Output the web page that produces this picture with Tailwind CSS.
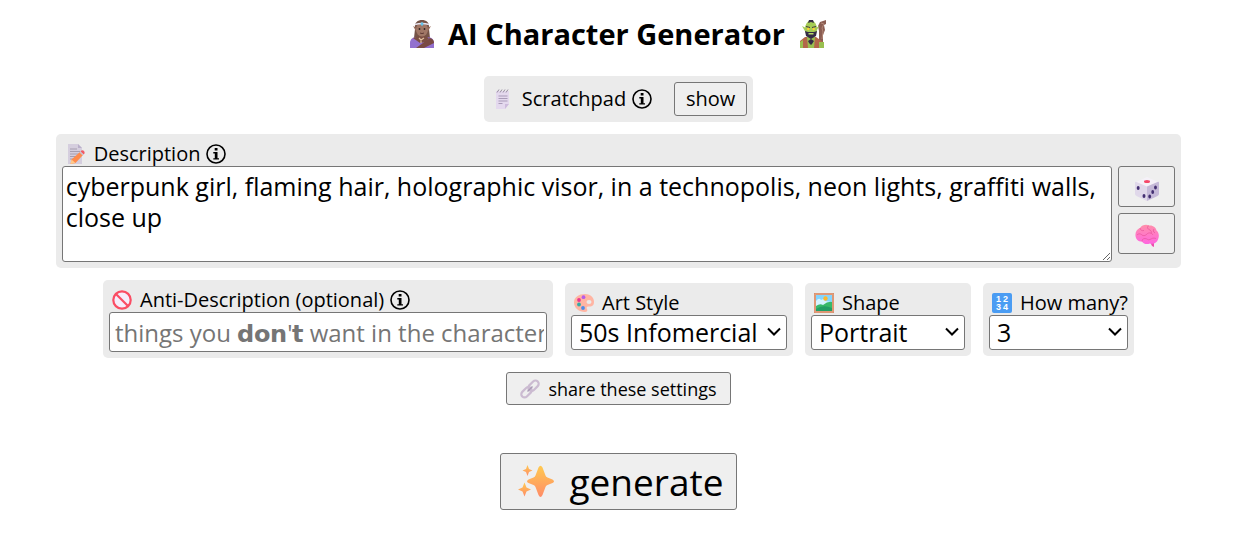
<!DOCTYPE html>
<html lang="en">
  <head>
    <meta charset="UTF-8" />
    <meta name="viewport" content="width=device-width, initial-scale=1.0" />
    <script src="https://cdn.jsdelivr.net/npm/@tailwindcss/browser@4"></script>
    <title>AI Character Generator</title>
  </head>
  <body class="bg-white pr-[13px] font-['Open_Sans','Noto_Sans',sans-serif] text-black">
    <!-- shared icons -->
    <svg class="hidden">
      <symbol id="info" viewBox="0 0 20 20">
        <circle cx="10" cy="10" r="9" fill="none" stroke="#000" stroke-width="1.6" />
        <path d="M8.700 4h2.800v2.400H8.700zM7.300 8h4.200v6.200h1.500v1.400H7.300v-1.400h1.500V9.400H7.300z" />
      </symbol>
      <symbol id="chevron" viewBox="0 0 14 10">
        <path d="M1 1.500l6 6 6-6" fill="none" stroke="#000" stroke-width="2" />
      </symbol>
    </svg>

    <main class="flex flex-col items-center pt-3">
      <!-- title -->
      <h1 class="flex h-11 items-center gap-3.5 text-[29px] font-bold">
        <svg class="h-7 w-6" viewBox="0 0 24 28" aria-hidden="true">
          <path d="M5 9C4 2 8 0 12 0s8 2 7 9l1 9H4z" fill="#755347" />
          <path d="M3 6l3.500 2v4zM21 6l-3.500 2v4z" fill="#966b5b" />
          <path d="M0 28v-5c0-4 3-6 7-6h10c4 0 7 2 7 6v5z" fill="#9270ce" />
          <path d="M3 18l6-2h6l4 2-3 4-6 1z" fill="#7b4f43" />
          <ellipse cx="12" cy="9.500" rx="6" ry="7" fill="#a07766" />
          <path d="M6 28l14-10q4 1 4 5l-10 5z" fill="#7a4a43" />
          <path d="M5 4.500q7-2 14 0" fill="none" stroke="#e5e2ee" stroke-width="1.500" />
          <path d="M12 1.800l1.700 2.200L12 6.200 10.300 4z" fill="#64c5ed" />
          <circle cx="9.500" cy="9" r=".9" fill="#302620" />
          <circle cx="14.500" cy="9" r=".9" fill="#302620" />
          <path d="M10 13q2 1.200 4 0" fill="none" stroke="#603b36" />
          <path d="M9 18l2 2 3-2M11 20v3" fill="none" stroke="#e3c3a0" stroke-width="1.200" />
        </svg>
        <span>AI Character Generator</span>
        <svg class="h-7 w-7" viewBox="0 0 28 28" aria-hidden="true">
          <path d="M20 28V11l-1-5 2-4 6-2v4l-2 1 1 5-2 5v13z" fill="#8b5d52" />
          <path d="M22 3l3 1-2 4 1 4-1 7" fill="none" stroke="#b38777" />
          <path d="M1 28v-7l5-4h11l7 5v6z" fill="#b3664a" />
          <path d="M1 22l3-2v8H1zM20 22h5v6h-5zM8 17h8l-1 11H9z" fill="#9abf50" />
          <path d="M3 6l4 2v5zM20 6l-3 2v4z" fill="#a8cc59" />
          <ellipse cx="12" cy="9" rx="6" ry="8.500" fill="#a5cc55" />
          <path d="M6 11l3 1h6l3-1-1 5-5 3-5-3z" fill="#352b46" />
          <path d="M9.500 13h5v1.500h-5z" fill="#b7d96b" />
          <path d="M10 0h4l1 3-3-1-3 1z" fill="#352b46" />
          <path d="M7 6.500l4 1M17 6.500l-4 1" stroke="#443341" />
          <circle cx="9.300" cy="9" r="1.200" fill="#ffcf36" />
          <circle cx="14.700" cy="9" r="1.200" fill="#ffcf36" />
          <path d="M12 19l3 2-2 3-1 1-2-2-1-2z" fill="#352b46" />
        </svg>
      </h1>

      <!-- scratchpad -->
      <section class="mt-5 flex items-center rounded-[5px] bg-[#ebebeb] p-1.5">
        <svg class="ml-1.5 h-5 w-3.5" viewBox="0 0 14 20" aria-hidden="true">
          <path d="M0 2h13v13l-4 5H0z" fill="#e4d9ee" />
          <path d="M9 15h4l-4 5z" fill="#cdbbdc" />
          <path d="M2.500 7h9M2.500 9.500h9M2.500 12h9M2.500 14.500h4" stroke="#a99bb8" />
          <path d="M1 3.500l2-3M4 3.500l2-3M7 3.500l2-3M10 3.500l2-3" stroke="#968ca0" />
        </svg>
        <span class="ml-3 text-[20px] leading-6">Scratchpad</span>
        <svg class="ml-1.5 size-5"><use href="#info" /></svg>
        <button class="ml-[22px] h-[34px] w-[73px] rounded-[3px] border border-[#767676] bg-[#efefef] text-[20px] leading-6">show</button>
      </section>

      <!-- description -->
      <section class="mt-3 w-[91%] rounded-[5px] bg-[#ebebeb] px-1.5 pt-2 pb-1.5">
        <label for="description" class="flex items-center pl-1 text-[20px] leading-6">
          <svg class="size-5" viewBox="0 0 20 20" aria-hidden="true">
            <path d="M2 0h10l4 4v16H2z" fill="#d5cede" />
            <path d="M12 0v4h4z" fill="#b9afca" />
            <path d="M4 5h7M4 7.500h10M4 10h9M4 12.500h7M4 15h4" stroke="#a69eb0" />
            <path d="M5.500 15.500L14 8l3 3-7.500 8-5 1z" fill="#ff8b4c" />
            <path d="M14.500 7.500l1-1q1.500-.5 2.500.5t.5 2.500l-1 1z" fill="#f15b65" />
            <path d="M13.500 8.500l1-1 3 3-1 1z" fill="#c7c2d2" />
            <path d="M5.500 15.500l4 3.500-5 1z" fill="#ffcb8c" />
          </svg>
          <span class="ml-2">Description</span>
          <svg class="ml-1.5 size-5"><use href="#info" /></svg>
        </label>
        <div class="flex gap-1.5">
          <textarea id="description" class="h-24 min-w-0 flex-1 resize rounded-[3px] border border-[#767676] bg-white px-[3px] py-1 text-[25px] leading-[31px]">cyberpunk girl, flaming hair, holographic visor, in a technopolis, neon lights, graffiti walls, close up</textarea>
          <div class="flex w-[57px] flex-col gap-1.5">
            <button aria-label="Random description" class="flex h-[41px] items-center justify-center rounded-[3px] border border-[#767676] bg-[#efefef]">
              <svg class="mt-1 size-6" viewBox="0 0 24 24" aria-hidden="true">
                <path d="M1 5L12 0l11 5-11 6z" fill="#f5f1f8" />
                <path d="M0 5.500q0-1 1.500-.5L12 9.500V24L1.500 19Q0 18 0 17z" fill="#e0d8ea" />
                <path d="M24 5.500q0-1-1.500-.5L12 9.500V24l10.500-5q1.500-1 1.500-2z" fill="#c5b9d8" />
                <ellipse cx="12" cy="4.500" rx="3" ry="1.500" fill="#f5476a" />
                <g fill="#443072">
                  <ellipse cx="3.200" cy="11" rx="1.500" ry="2" />
                  <ellipse cx="9" cy="19" rx="1.500" ry="2" />
                  <ellipse cx="20.500" cy="10.500" rx="1.400" ry="2" />
                  <ellipse cx="17.700" cy="15" rx="1.400" ry="2" />
                  <ellipse cx="14.700" cy="19.500" rx="1.400" ry="2" />
                </g>
              </svg>
            </button>
            <button aria-label="Improve description" class="flex h-[41px] items-center justify-center rounded-[3px] border border-[#767676] bg-[#efefef]">
              <svg class="mt-1 size-6" viewBox="0 0 24 24" aria-hidden="true">
                <defs>
                  <linearGradient id="brain" x1="0" y1="0" x2="0" y2="1">
                    <stop stop-color="#ff8faa" />
                    <stop offset="1" stop-color="#ff66e0" />
                  </linearGradient>
                </defs>
                <path d="M16 18l3 1v4l-2-1-2-4z" fill="#ed4fae" />
                <path d="M.5 12C0 8 2 5 5 4c2-3 6-4 9-2.500 4-.5 7 2 7.500 5 2.500 2 3 6 1.500 9-1 3-4 5-8 4-3 1-6 1-8-2-4 0-6-2-6.500-5.500z" fill="url(#brain)" />
                <path d="M5 4c0 2 2 3 4 2.500M14 1.500c-2 1-2 3 0 4s3 2 2 4M2 11c2-2 4-1 5 0s3 1 5-1 5-1 6 1M7 17.500c0-2 1-3 3-3s3 2 5 1 3-2 6-1M19 5c-1 1-1 3 1 4" fill="none" stroke="#e8559b" stroke-width=".7" />
              </svg>
            </button>
          </div>
        </div>
      </section>

      <!-- options -->
      <div class="mt-3 flex items-center justify-center gap-3">
        <section class="rounded-[5px] bg-[#ebebeb] px-1.5 pt-2 pb-1.5">
          <label for="anti" class="flex items-center pl-[3px] text-[20px] leading-6">
            <svg class="size-5" viewBox="0 0 20 20" aria-hidden="true">
              <circle cx="10" cy="10" r="8.700" fill="#f6edfb" stroke="#fa4d64" stroke-width="2.200" />
              <path d="M4 4l12 12" stroke="#fa4d64" stroke-width="2.200" />
            </svg>
            <span class="ml-2">Anti-Description (optional)</span>
            <svg class="ml-1.5 size-5"><use href="#info" /></svg>
          </label>
          <input id="anti" type="text" placeholder="things you 𝗱𝗼𝗻'𝘁 want in the character" class="block h-10 w-[438px] rounded-[3px] border border-[#767676] bg-white pr-0.5 pl-[5px] text-[24px] placeholder:text-[#757575]" />
        </section>

        <section class="rounded-[5px] bg-[#ebebeb] px-1.5 pt-2 pb-1.5">
          <label for="style" class="flex items-center pl-[3px] text-[20px] leading-6">
            <svg class="size-5" viewBox="0 0 20 20" aria-hidden="true">
              <path d="M11 1c6 0 9 4 9 8s-3 5-5 4.500-3 1-2 2.500 0 3-2 3C5 19 0 15 0 9.500S5 1 11 1z" fill="#ffb5a3" />
              <ellipse cx="15" cy="9" rx="2.500" ry="2" fill="#ebebeb" />
              <circle cx="9.500" cy="4.200" r="1.900" fill="#b65bea" />
              <circle cx="5" cy="7" r="1.900" fill="#ea3791" />
              <circle cx="5" cy="11.500" r="1.900" fill="#35aaa7" />
              <circle cx="9" cy="15" r="1.900" fill="#4b8ce8" />
            </svg>
            <span class="ml-2">Art Style</span>
          </label>
          <div class="relative w-[216px]">
            <select id="style" class="block h-[35px] w-full appearance-none rounded-[3px] border border-[#767676] bg-white pr-6 pl-[7px] text-[25px] leading-8">
              <option>50s Infomercial Anime</option>
            </select>
            <svg class="pointer-events-none absolute top-3 right-1.5 h-2.5 w-3.5"><use href="#chevron" /></svg>
          </div>
        </section>

        <section class="rounded-[5px] bg-[#ebebeb] px-1.5 pt-2 pb-1.5">
          <label for="shape" class="flex items-center pl-[3px] text-[20px] leading-6">
            <svg class="size-5" viewBox="0 0 20 20" aria-hidden="true">
              <path d="M0 0h20v20H0z" fill="#d58e6c" />
              <path d="M2 2h16v16H2z" fill="#83d5ff" />
              <path d="M2 8q3-4 5-1 3-2 4 1l7 1v4H2z" fill="#d5f3ff" />
              <circle cx="11.500" cy="5.500" r="2.200" fill="#fcb72c" />
              <path d="M2 13q4-3 7-1 5-4 9-3v9H2z" fill="#37b96a" />
              <path d="M2 16q7-5 16-1v3H2z" fill="#229e65" />
              <path d="M1 1h18v18H1z" fill="none" stroke="#e8a17e" />
            </svg>
            <span class="ml-2">Shape</span>
          </label>
          <div class="relative w-[154px]">
            <select id="shape" class="block h-[35px] w-full appearance-none rounded-[3px] border border-[#767676] bg-white pr-6 pl-[7px] text-[25px] leading-8">
              <option>Portrait</option>
              <option>Square</option>
              <option>Landscape</option>
            </select>
            <svg class="pointer-events-none absolute top-3 right-1.5 h-2.5 w-3.5"><use href="#chevron" /></svg>
          </div>
        </section>

        <section class="rounded-[5px] bg-[#ebebeb] px-1.5 pt-2 pb-1.5">
          <label for="count" class="flex items-center pl-[3px] text-[20px] leading-6">
            <svg class="size-5" viewBox="0 0 20 20" aria-hidden="true">
              <rect width="20" height="20" rx="2" fill="#4a9cf3" />
              <g fill="#fff" font-family="Liberation Sans, sans-serif" font-size="9" font-weight="700">
                <text x="4" y="9">1</text>
                <text x="11" y="9">2</text>
                <text x="4" y="17">3</text>
                <text x="11" y="17">4</text>
              </g>
            </svg>
            <span class="ml-2 whitespace-nowrap">How many?</span>
          </label>
          <div class="relative w-[139px]">
            <select id="count" class="block h-[35px] w-full appearance-none rounded-[3px] border border-[#767676] bg-white pr-6 pl-[7px] text-[25px] leading-8">
              <option>3</option>
              <option>6</option>
            </select>
            <svg class="pointer-events-none absolute top-3 right-1.5 h-2.5 w-3.5"><use href="#chevron" /></svg>
          </div>
        </section>
      </div>

      <!-- actions -->
      <button class="mt-3.5 flex h-[33px] w-[225px] items-center justify-center rounded-[3px] border border-[#767676] bg-[#efefef] text-[18px] leading-6">
        <svg class="size-5" viewBox="0 0 20 20" aria-hidden="true">
          <g fill="none" stroke="#cbbbd1" stroke-width="2.200">
            <rect x="7.500" y="3.500" width="12" height="6.500" rx="3.250" transform="rotate(-45 13.500 6.750)" />
            <rect x=".5" y="10" width="12" height="6.500" rx="3.250" transform="rotate(-45 6.500 13.250)" />
          </g>
          <path d="M7.500 12.500l5-5" stroke="#aa9bb5" stroke-width="1.500" />
        </svg>
        <span class="ml-2">share these settings</span>
      </button>

      <button class="mt-12 flex h-[57px] w-[237px] items-center justify-center rounded-[3px] border border-[#767676] bg-[#efefef] pl-1 text-[37px] leading-[50px]">
        <svg class="size-9" viewBox="0 0 36 36" aria-hidden="true">
          <defs>
            <linearGradient id="spark" x1="0" y1="0" x2="0" y2="1">
              <stop stop-color="#ffc94f" />
              <stop offset="1" stop-color="#ff8c68" />
            </linearGradient>
          </defs>
          <g fill="url(#spark)">
            <path d="M20.500 3.500Q22.500 0 24.500 3.500l3 8q.5 1.500 2 2l5 2q3 2 0 3.500l-5 2q-1.500.5-2 2l-3 8q-2 4-4 0l-3-8q-.5-1.500-2-2l-5-2q-3-1.500 0-3.500l5-2q1.500-.5 2-2z" />
            <path d="M9.500 1l1.500 4 3.500 1.500L11 8l-1.500 4L8 8 4.500 6.500 8 5z" />
            <path d="M6.500 18.500l2 5 4.500 2-4.500 2-2 5-2-5-4.500-2 4.500-2z" />
          </g>
        </svg>
        <span class="ml-4">generate</span>
      </button>
    </main>
  </body>
</html>
